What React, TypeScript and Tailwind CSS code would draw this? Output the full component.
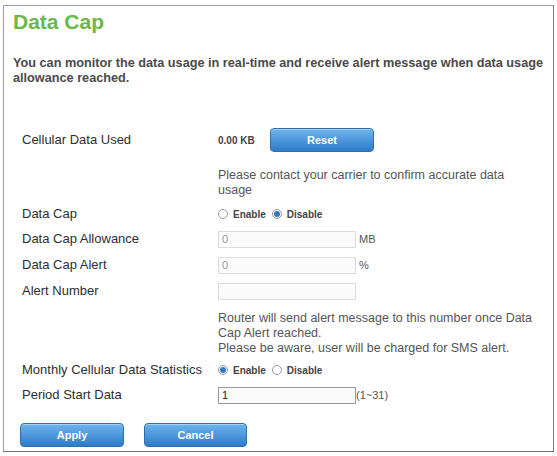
import React from "react";

const labelCls = "text-[13px] leading-[18px] text-[#2e2e2e]";

function Radio({ checked }: { checked?: boolean }) {
  return (
    <span className="inline-flex items-center justify-center w-[10px] h-[10px] rounded-full border border-[#9a9a9a] bg-white mr-[5px]">
      {checked && <span className="w-[6px] h-[6px] rounded-full bg-[#2f78c8]" />}
    </span>
  );
}

function BlueButton({ children, className = "" }: { children: React.ReactNode; className?: string }) {
  return (
    <button
      className={`h-[24px] rounded-[4px] border border-[#2d6eae] bg-gradient-to-b from-[#6db4ee] to-[#2c7ccb] text-white text-[11px] font-bold shadow-[inset_0_1px_0_rgba(255,255,255,0.4)] ${className}`}
    >
      {children}
    </button>
  );
}

function TextBox({ value = "", dark }: { value?: string; dark?: boolean }) {
  return (
    <div
      className={`w-[138px] h-[17px] border ${dark ? "border-[#9a9a9a]" : "border-[#dcdcdc]"} bg-[#fbfbfb] px-[3px] text-[11px] leading-[15px] ${dark ? "text-[#222]" : "text-[#999]"}`}
    >
      {value}
    </div>
  );
}

function Row({ label, children, className = "" }: { label?: string; children: React.ReactNode; className?: string }) {
  return (
    <div className={`flex items-center min-h-[18px] ${className}`}>
      <div className={`w-[196px] shrink-0 ${labelCls}`}>{label}</div>
      <div className="flex items-center">{children}</div>
    </div>
  );
}

export default function App() {
  return (
    <div className="w-[557px] h-[456px] bg-white pt-[5px] px-[3px] pb-[4px] font-['Liberation_Sans',Arial,sans-serif]">
      <div className="h-full border border-[#9c9c9c] border-b-[#6f6f6f] border-r-[#7a7a7a] pl-[9px] pr-[6px]">
        <h1 className="text-[21px] leading-[26px] mt-[3px] font-bold text-[#6ab848]">Data Cap</h1>

        <p className="mt-[21px] text-[12.7px] leading-[15px] font-bold text-[#4a4a4a]">
          You can monitor the data usage in real-time and receive alert message when data usage allowance reached.
        </p>

        <div className="pl-[9px] mt-[42px]">
          <Row label="Cellular Data Used">
            <span className="text-[10px] font-bold text-[#444] w-[52px]">0.00 KB</span>
            <BlueButton className="w-[104px]">Reset</BlueButton>
          </Row>

          <Row className="mt-[16px]">
            <p className="w-[310px] text-[12.5px] leading-[15px] text-[#555]">
              Please contact your carrier to confirm accurate data usage
            </p>
          </Row>

          <Row label="Data Cap" className="mt-[7px]">
            <span className="flex items-center text-[10px] font-bold text-[#444]">
              <Radio />
              Enable
              <span className="ml-[6px]" />
              <Radio checked />
              Disable
            </span>
          </Row>

          <Row label="Data Cap Allowance" className="mt-[7px]">
            <TextBox value="0" />
            <span className="ml-[3px] text-[11px] text-[#555]">MB</span>
          </Row>

          <Row label="Data Cap Alert" className="mt-[8px]">
            <TextBox value="0" />
            <span className="ml-[3px] text-[11px] text-[#555]">%</span>
          </Row>

          <Row label="Alert Number" className="mt-[8px]">
            <TextBox />
          </Row>

          <Row className="mt-[11px]">
            <p className="w-[330px] text-[12.5px] leading-[15px] text-[#555]">
              Router will send alert message to this number once Data Cap Alert reached.
              <br />
              Please be aware, user will be charged for SMS alert.
            </p>
          </Row>

          <Row label="Monthly Cellular Data Statistics" className="mt-[5px]">
            <span className="flex items-center text-[10px] font-bold text-[#444]">
              <Radio checked />
              Enable
              <span className="ml-[6px]" />
              <Radio />
              Disable
            </span>
          </Row>

          <Row label="Period Start Data" className="mt-[7px]">
            <TextBox value="1" dark />
            <span className="text-[11px] text-[#555]">(1~31)</span>
          </Row>
        </div>

        <div className="flex gap-[20px] mt-[19px] pl-[7px]">
          <BlueButton className="w-[104px]">Apply</BlueButton>
          <BlueButton className="w-[103px]">Cancel</BlueButton>
        </div>
      </div>
    </div>
  );
}
